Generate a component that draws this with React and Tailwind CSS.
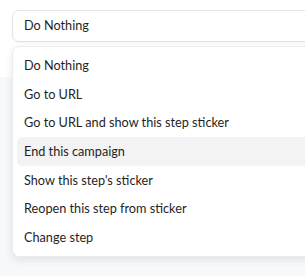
import React from 'react';

const options = [
    'Do Nothing',
    'Go to URL',
    'Go to URL and show this step sticker',
    'End this campaign',
    "Show this step's sticker",
    'Reopen this step from sticker',
    'Change step',
];

const App = () => {
    const active = 'End this campaign';

    return (
        <div className="relative w-[305px] h-[276px] overflow-hidden bg-[#f7f8fa] font-['Lato',sans-serif] text-[12.7px] text-[#1f1f1f]">
            <div className="h-[77px] bg-white"></div>
            <div className="absolute top-[10px] left-[12px] w-[330px]">
                <div className="h-[32px] flex items-center px-[11px] bg-white border border-[#e3e3e3] rounded-[7px] shadow-[0_1px_2px_rgba(0,0,0,0.04)]">
                    Do Nothing
                </div>
                <div className="mt-[4px] bg-white border border-[#ececec] rounded-[7px] py-[4px] px-[4px] shadow-[0_3px_8px_rgba(0,0,0,0.09)]">
                    {options.map(opt => (
                        <div
                            key={opt}
                            className={`h-[28.7px] flex items-center px-[7px] rounded-[5px] ${opt === active ? 'bg-[#f3f3f3]' : ''}`}
                        >
                            {opt}
                        </div>
                    ))}
                </div>
            </div>
        </div>
    );
};

export default App;
